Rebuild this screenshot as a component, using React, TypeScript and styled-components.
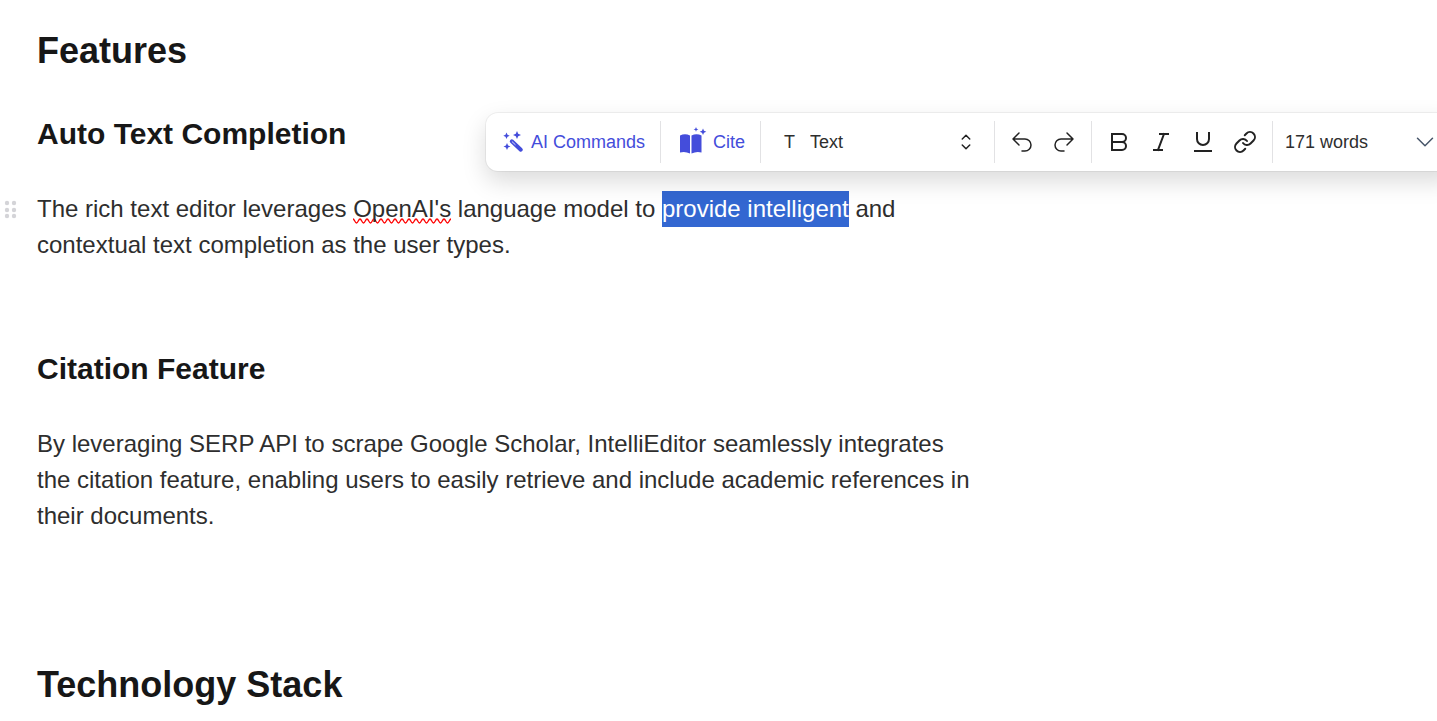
import React from "react";
import styled, { createGlobalStyle } from "styled-components";

const GlobalStyle = createGlobalStyle`
  *, *::before, *::after { box-sizing: border-box; }
  body {
    margin: 0;
    background: #ffffff;
    font-family: "Liberation Sans", Arial, Helvetica, sans-serif;
    color: #2e2e2e;
  }
`;

const Page = styled.div`
  position: relative;
  min-height: 100vh;
  overflow: hidden;
`;

const Document = styled.main`
  display: flex;
  flex-direction: column;
  padding: 29px 0 12px;
`;

const Block = styled.div<{ $before?: number }>`
  display: grid;
  grid-template-columns: 37px minmax(0, 940px);
  margin-top: ${({ $before = 0 }) => $before}px;
`;

const Title = styled.h1`
  grid-column: 2;
  margin: 0;
  font-size: 36px;
  line-height: 44px;
  font-weight: 700;
  color: #171717;
`;

const Subtitle = styled.h2`
  grid-column: 2;
  margin: 0;
  font-size: 30px;
  line-height: 36px;
  font-weight: 700;
  color: #171717;
`;

const Paragraph = styled.p`
  grid-column: 2;
  margin: 0;
  font-size: 24px;
  line-height: 36px;
`;

const wave =
  "data:image/svg+xml,%3Csvg xmlns='http://www.w3.org/2000/svg' width='7' height='6'%3E%3Cpath d='M-1 .5L0 1C1.500 1 2 5 3.500 5S5.500 1 7 1L8 .5' fill='none' stroke='red' stroke-width='1.300'/%3E%3C/svg%3E";

const Misspelled = styled.span`
  padding-bottom: 2px;
  background: url("${wave}") left bottom repeat-x;
`;

const Selected = styled.mark`
  padding: 4px 0 5px;
  background: #3367d1;
  color: #ffffff;
`;

const DragHandle = styled.button`
  display: flex;
  justify-content: flex-start;
  align-items: center;
  height: 36px;
  padding: 0 0 0 4px;
  border: 0;
  background: none;
  cursor: grab;
`;

const Toolbar = styled.div`
  position: absolute;
  top: 113px;
  left: 486px;
  right: -20px;
  display: flex;
  align-items: center;
  height: 58px;
  border-radius: 12px;
  background: #ffffff;
  box-shadow: 0 0 0 1px rgba(0, 0, 0, 0.05), 0 10px 24px rgba(0, 0, 0, 0.15);
`;

const Group = styled.div<{ $gap?: number; $pad: string; $grow?: boolean }>`
  display: flex;
  align-items: center;
  flex: ${({ $grow }) => ($grow ? "1 0 auto" : "0 0 auto")};
  gap: ${({ $gap = 0 }) => $gap}px;
  height: 42px;
  padding: ${({ $pad }) => $pad};
  & + & { border-left: 1px solid #e2e2e4; }
`;

const ToolButton = styled.button<{ $accent?: boolean; $gap?: number }>`
  display: flex;
  align-items: center;
  gap: ${({ $gap = 0 }) => $gap}px;
  padding: 0;
  border: 0;
  background: none;
  font: inherit;
  font-size: 18px;
  line-height: 24px;
  color: ${({ $accent }) => ($accent ? "#444ddb" : "#2e2e2e")};
  cursor: pointer;
`;

const WordCount = styled(ToolButton)`
  flex: 1;
  justify-content: space-between;
`;

const StyleLabel = styled.label`
  display: flex;
  align-items: center;
  width: 194px;
  font-size: 18px;
  line-height: 24px;
`;

const StyleGlyph = styled.span`
  width: 26px;
`;

const StyleSelect = styled.select`
  flex: 1;
  min-width: 0;
  padding: 0;
  border: 0;
  appearance: none;
  background: none;
  font: inherit;
  color: inherit;
`;

const Svg = styled.svg`
  display: block;
  flex: none;
  overflow: visible;
`;

type LineProps = { d: string; weight?: number; color?: string; square?: boolean };

const LineIcon = ({ d, weight = 2, color = "#222222", square = false }: LineProps) => (
  <Svg width="24" height="24" viewBox="0 0 24 24" fill="none" stroke={color}
    strokeWidth={weight} strokeLinecap={square ? "square" : "round"}
    strokeLinejoin={square ? "miter" : "round"} aria-hidden="true">
    <path d={d} />
  </Svg>
);

const WandIcon = () => (
  <Svg width="20" height="22" viewBox="0 0 20 22" fill="currentColor" aria-hidden="true">
    <path d="M14 0l1.200 2.800 2.800 1.200-2.800 1.200-1.200 2.800-1.200-2.800L10 4l2.800-1.200z" />
    <path d="M3.500 1.500l1 2.200 2.200 1-2.200 1-1 2.200-1-2.200-2.200-1 2.200-1z" />
    <path d="M4 12l1.100 2.400 2.400 1.100-2.400 1.100L4 19l-1.100-2.400-2.400-1.100 2.400-1.100z" />
    <path d="M8.800 10.300l9 8.400" fill="none" stroke="currentColor" strokeWidth="4" strokeLinecap="round" />
    <path d="M9.200 10.800l3 2.800" stroke="#ffffff" strokeWidth=".8" strokeLinecap="round" />
  </Svg>
);

const BookIcon = () => (
  <Svg width="28" height="28" viewBox="0 0 28 28" fill="currentColor" aria-hidden="true">
    <path d="M1 7.500Q6 5 11 7.500V25.500Q6 23 1 24.500z" />
    <path d="M12.500 7.500Q17.500 5 22.500 7.500V24.500Q17.500 23 12.500 25.500z" />
    <path d="M24 .5l1 2.300 2.300 1-2.300 1-1 2.300-1-2.300-2.300-1 2.300-1z" />
    <path d="M17-1l.7 1.700 1.700.7-1.700.7-.7 1.700-.7-1.700-1.700-.7 1.700-.7z" />
  </Svg>
);

const DotsIcon = () => (
  <Svg width="14" height="20" viewBox="0 0 14 20" fill="#d4d4d8" aria-hidden="true">
    {[3, 10].map((x) => [4, 11, 17].map((y) => <circle key={`${x}-${y}`} cx={x} cy={y} r="2.200" />))}
  </Svg>
);

export default function App() {
  return (
    <Page>
      <GlobalStyle />
      <Document>
        <Block><Title>Features</Title></Block>
        <Block $before={43}><Subtitle>Auto Text Completion</Subtitle></Block>
        <Block $before={39}>
          <DragHandle type="button" aria-label="Move block"><DotsIcon /></DragHandle>
          <Paragraph>
            The rich text editor leverages <Misspelled>OpenAI's</Misspelled> language model to{" "}
            <Selected>provide intelligent</Selected> and contextual text completion as the user types.
          </Paragraph>
        </Block>
        <Block $before={88}><Subtitle>Citation Feature</Subtitle></Block>
        <Block $before={39}>
          <Paragraph>
            By leveraging SERP API to scrape Google Scholar, IntelliEditor seamlessly integrates
            the citation feature, enabling users to easily retrieve and include academic references in
            their documents.
          </Paragraph>
        </Block>
        <Block $before={129}><Title>Technology Stack</Title></Block>
      </Document>

      <Toolbar role="toolbar" aria-label="Formatting">
        <Group $pad="0 15px 0 17px">
          <ToolButton type="button" $accent $gap={8}><WandIcon />AI Commands</ToolButton>
        </Group>
        <Group $pad="0 15px 0 18px">
          <ToolButton type="button" $accent $gap={6}><BookIcon />Cite</ToolButton>
        </Group>
        <Group $pad="0 16px 0 23px">
          <StyleLabel>
            <StyleGlyph aria-hidden="true">T</StyleGlyph>
            <StyleSelect aria-label="Text style" defaultValue="Text"><option>Text</option></StyleSelect>
            <LineIcon weight={1.5} d="M8.250 15 12 18.750 15.750 15m-7.500-6L12 5.250 15.750 9" />
          </StyleLabel>
        </Group>
        <Group $gap={18} $pad="0 15px">
          <ToolButton type="button" aria-label="Undo"><LineIcon weight={1.5} d="M9 15 3 9m0 0 6-6M3 9h12a6 6 0 0 1 0 12h-3" /></ToolButton>
          <ToolButton type="button" aria-label="Redo"><LineIcon weight={1.5} d="m15 15 6-6m0 0-6-6m6 6H9a6 6 0 0 0 0 12h3" /></ToolButton>
        </Group>
        <Group $gap={18} $pad="0 15px">
          <ToolButton type="button" aria-label="Bold"><LineIcon square d="M5 12H15a4 4 0 0 0 0-8H5V20H15a4 4 0 0 0 0-8" /></ToolButton>
          <ToolButton type="button" aria-label="Italic"><LineIcon square d="M19 4h-8M13 20H5M15 4 9 20" /></ToolButton>
          <ToolButton type="button" aria-label="Underline"><LineIcon square d="M6 3v6a6 6 0 0 0 12 0V3M4 21h16" /></ToolButton>
          <ToolButton type="button" aria-label="Link"><LineIcon d="M10 13a5 5 0 0 0 7.540.540l3-3a5 5 0 0 0-7.070-7.070l-1.720 1.710M14 11a5 5 0 0 0-7.540-.540l-3 3a5 5 0 0 0 7.070 7.070l1.710-1.710" /></ToolButton>
        </Group>
        <Group $grow $pad="0 20px 0 12px">
          <WordCount type="button">171 words<LineIcon weight={1.5} color="#475569" d="m19.500 8.250-7.500 7.500-7.500-7.500" /></WordCount>
        </Group>
      </Toolbar>
    </Page>
  );
}
